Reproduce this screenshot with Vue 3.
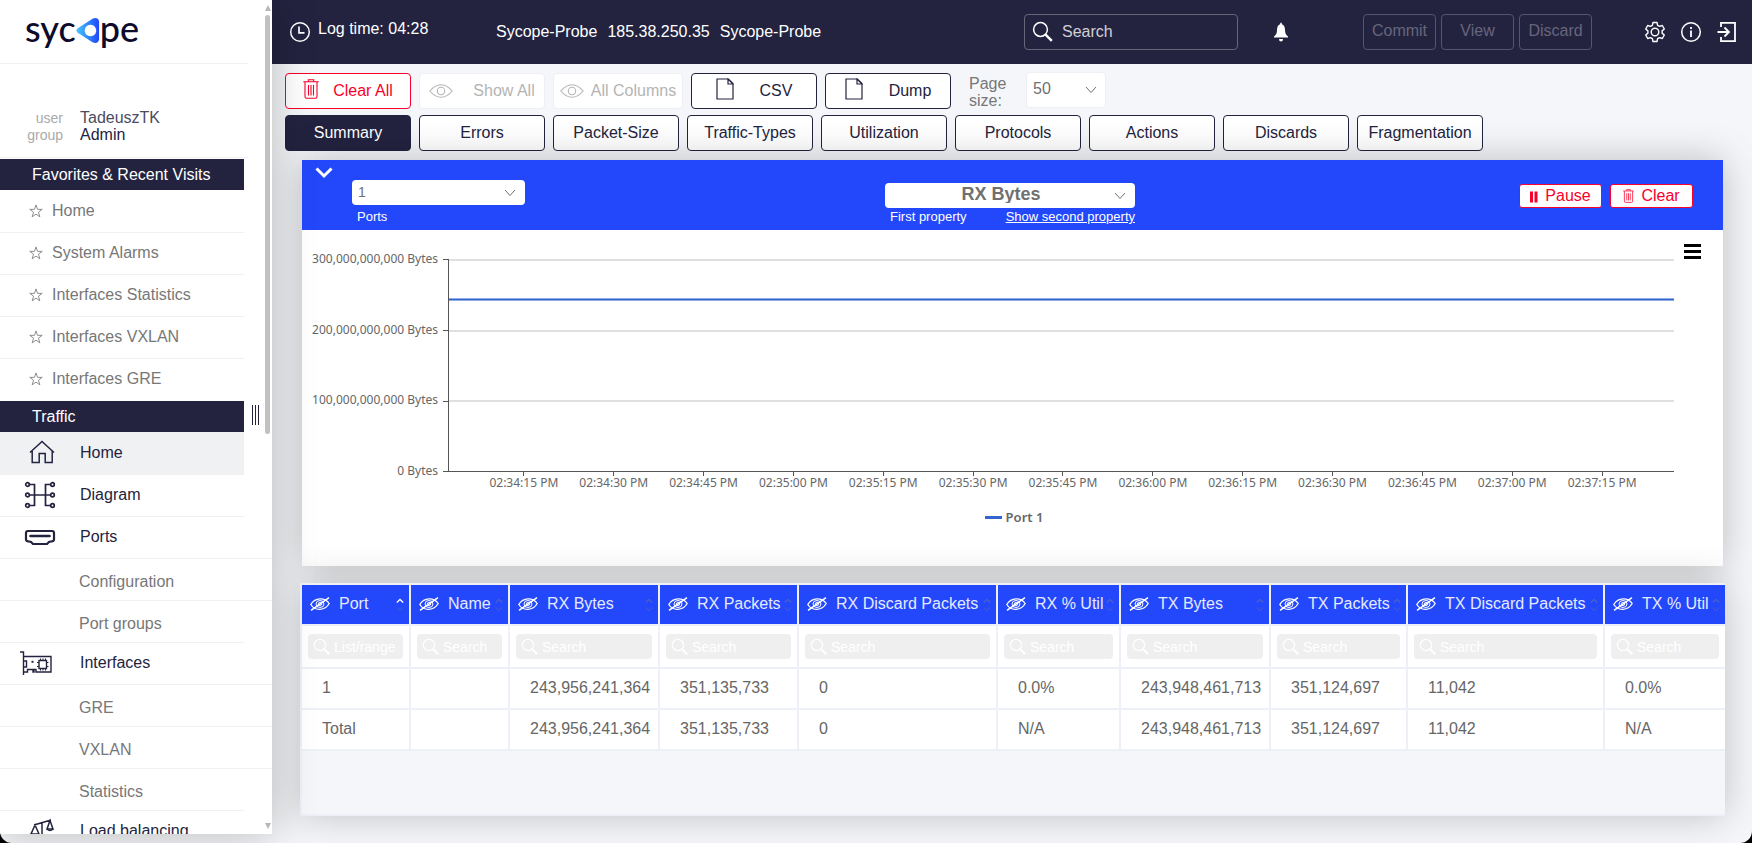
<script setup>
import { ref } from 'vue'

const favorites = ['Home', 'System Alarms', 'Interfaces Statistics', 'Interfaces VXLAN', 'Interfaces GRE']

const traffic = [
  { label: 'Home', icon: 'home', active: true },
  { label: 'Diagram', icon: 'diagram' },
  { label: 'Ports', icon: 'ports', children: ['Configuration', 'Port groups'] },
  { label: 'Interfaces', icon: 'card', children: ['GRE', 'VXLAN', 'Statistics'] },
  { label: 'Load balancing', icon: 'scale' }
]

const tabs = ['Summary', 'Errors', 'Packet-Size', 'Traffic-Types', 'Utilization', 'Protocols', 'Actions', 'Discards', 'Fragmentation']
const activeTab = ref('Summary')

const yLabels = ['300,000,000,000 Bytes', '200,000,000,000 Bytes', '100,000,000,000 Bytes', '0 Bytes']
const xLabels = [
  '02:34:15 PM', '02:34:30 PM', '02:34:45 PM', '02:35:00 PM', '02:35:15 PM', '02:35:30 PM', '02:35:45 PM',
  '02:36:00 PM', '02:36:15 PM', '02:36:30 PM', '02:36:45 PM', '02:37:00 PM', '02:37:15 PM'
]
const rxBytes = 243956241364
const lineTop = (1 - rxBytes / 300000000000) * 100 + '%'

const columns = [
  { name: 'Port', share: 109 },
  { name: 'Name', share: 99 },
  { name: 'RX Bytes', share: 150 },
  { name: 'RX Packets', share: 139 },
  { name: 'RX Discard Packets', share: 199 },
  { name: 'RX % Util', share: 123 },
  { name: 'TX Bytes', share: 150 },
  { name: 'TX Packets', share: 137 },
  { name: 'TX Discard Packets', share: 197 },
  { name: 'TX % Util', share: 120 }
]
const totalShare = columns.reduce((sum, c) => sum + c.share, 0)

const rows = [
  ['1', '', '243,956,241,364', '351,135,733', '0', '0.0%', '243,948,461,713', '351,124,697', '11,042', '0.0%'],
  ['Total', '', '243,956,241,364', '351,135,733', '0', 'N/A', '243,948,461,713', '351,124,697', '11,042', 'N/A']
]
</script>

<template>
  <div class="app">
    <svg class="sprite" aria-hidden="true">
      <symbol id="i-star" viewBox="0 0 12 12"><path d="M6 .8 7.3 4.6h4L8.1 7l1.2 4L6 8.7 2.7 11l1.2-4L.7 4.6h4z" fill="none" stroke="currentColor" stroke-width=".7" /></symbol>
      <symbol id="i-home" viewBox="-2 0 32 28"><path d="M4 13.5 16 2.500l12 11M6.200 12v11.500h7v-9h6v9h7V12" fill="none" stroke="currentColor" stroke-width="1.500" /></symbol>
      <symbol id="i-diagram" viewBox="0 0 32 28">
        <g fill="none" stroke="currentColor" stroke-width="1.700"><path d="M5 3.500h5.500v21H5M27 3.500h-5.500v21H27M5 14h22" />
        <g fill="#fff"><circle cx="3.500" cy="3.500" r="1.800" /><circle cx="3.500" cy="14" r="1.800" /><circle cx="3.500" cy="24.500" r="1.800" /><circle cx="28.500" cy="3.500" r="1.800" /><circle cx="28.500" cy="14" r="1.800" /><circle cx="28.500" cy="24.500" r="1.800" /></g></g>
      </symbol>
      <symbol id="i-ports" viewBox="0 0 32 28"><path d="M4 8h24q2 0 2 2v6.500q0 1.500-2 1.800l-3 .7-2 2H9l-2-2-3-.7q-2-.3-2-1.800V10q0-2 2-2z" fill="none" stroke="currentColor" stroke-width="2.200" /><path d="M6.500 13h19" stroke="currentColor" stroke-width="2.600" stroke-linecap="round" /></symbol>
      <symbol id="i-card" viewBox="4 0 32 28" overflow="visible"><g fill="none" stroke="currentColor" stroke-width="1.400"><path d="M0 3h3.500v23M3.500 7.500H31v15.500H16v-2.500h-2V23h-1v-2.500H7.500V23h-4M3.500 12h3v6h-3M19 11.500h7.500v8H19z" /><path d="M20.500 11.500V9.500M23 11.500V9.500M25.500 11.500V9.500M20.500 21.500v-2M23 21.500v-2M25.500 21.500v-2M19 13.500h-2M19 17.500h-2M26.500 13.500h2M26.500 17.500h2" stroke-width="1" /><path d="M11.500 12.800h2" stroke-width="2" /></g></symbol>
      <symbol id="i-scale" viewBox="-2 0 32 28"><g fill="none" stroke="currentColor" stroke-width="1.500"><path d="M8 8 25 3M16 5.500V24M11 24h11M9 8l-4 9h8zM24 3.500 21 12h6z" /><path d="M4 17q5 4 9 0M21 12q3 3 6 0" /></g></symbol>
      <symbol id="i-clock" viewBox="0 0 22 22"><circle cx="11" cy="11" r="9.300" fill="none" stroke="currentColor" stroke-width="1.500" /><path d="M10 5.500v6.300h5.500" fill="none" stroke="currentColor" stroke-width="1.700" /></symbol>
      <symbol id="i-search" viewBox="0 0 22 22"><circle cx="8.500" cy="8.500" r="6.900" fill="none" stroke="currentColor" stroke-width="1.500" /><path d="m13.300 13.300 6.500 6.500" stroke="currentColor" stroke-width="2.500" /></symbol>
      <symbol id="i-bell" viewBox="0 0 16 20"><path d="M8 .5q.9 0 .9 1.700Q12 3.500 12 8q0 4.500 3 6.500v1H1v-1Q4 12.500 4 8q0-4.500 3.100-5.800Q7.100.5 8 .5zM6 17h4q0 2.500-2 2.500T6 17z" fill="currentColor" /></symbol>
      <symbol id="i-gear" viewBox="0 0 22 22"><g fill="none" stroke="currentColor" stroke-width="1.400"><path d="M9 1.500h4l.6 2.800 1.900 1.100 2.800-.9 2 3.500-2.200 1.900v2.200l2.200 1.900-2 3.500-2.800-.9-1.900 1.100-.6 2.800H9l-.6-2.800-1.900-1.100-2.800.9-2-3.500 2.200-1.900V9.900L1.700 8l2-3.500 2.800.9 1.900-1.100z" stroke-linejoin="round" /><circle cx="11" cy="11" r="3.800" /></g></symbol>
      <symbol id="i-info" viewBox="0 0 22 22"><circle cx="11" cy="11" r="9.300" fill="none" stroke="currentColor" stroke-width="1.500" /><path d="M11 9.500V16M11 6v2" stroke="currentColor" stroke-width="1.800" /></symbol>
      <symbol id="i-exit" viewBox="0 0 22 22"><path d="M5 6V1.800h14v18.400H5V16M1.500 11h11M8.500 6.500 13 11l-4.500 4.500" fill="none" stroke="currentColor" stroke-width="1.800" /></symbol>
      <symbol id="i-trash" viewBox="0 0 16 20"><g fill="none" stroke="currentColor" stroke-width="1.100"><path d="M.3 2.700h15.400M5.300 2.500V.7h5.400v1.800M2 3v14.500q0 1.800 1.600 1.800h8.800q1.600 0 1.600-1.800V3" /><path d="M5.500 6v10.500M8 6v10.500M10.500 6v10.500" /></g></symbol>
      <symbol id="i-eye" viewBox="0 0 24 14"><g fill="none" stroke="currentColor" stroke-width="1.100"><path d="M.8 7Q6 .7 12 .7T23.200 7Q18 13.300 12 13.300T.8 7z" /><circle cx="12" cy="7" r="3.700" /></g></symbol>
      <symbol id="i-file" viewBox="0 0 18 22"><path d="M1 1h11.500L17 5.500V21H1zM12 1v5h5z" fill="none" stroke="currentColor" stroke-width="1.200" /></symbol>
      <symbol id="i-hide" viewBox="0 0 20 14"><g fill="none" stroke="currentColor"><path d="M.8 7.500Q4 2 10 1.800t9.200 4.700Q16 12 10 12.300T.8 7.500z" stroke-width="1.300" /><ellipse cx="10" cy="7" rx="4" ry="3.500" /><ellipse cx="10" cy="7" rx="1.800" ry="1.500" /><path d="m1 13.300 18-12.600" stroke-width="1.600" /></g></symbol>
      <symbol id="i-down" viewBox="0 0 12 8"><path d="m1 1 5 5.500L11 1" fill="none" stroke="currentColor" stroke-width="1" /></symbol>
      <symbol id="i-sort" viewBox="0 0 8 14"><path d="m.8 4.500 3.200-3 3.200 3" fill="none" stroke="var(--up)" stroke-width="1.300" /><path d="M.8 9.500 4 12.500l3.200-3" fill="none" stroke="#4a5fc8" stroke-width="1" /></symbol>
    </svg>

    <aside class="sidebar">
      <div class="side-scroll">
        <a class="logo" href="#" aria-label="sycope">
          <span>syc</span>
          <svg viewBox="0 0 24 28" class="logo-mark"><defs><linearGradient id="lg"><stop offset="0" stop-color="#47c8fb" /><stop offset=".6" stop-color="#2b7bfb" /><stop offset="1" stop-color="#2347fb" /></linearGradient></defs><path fill="url(#lg)" fill-rule="evenodd" d="M1 12 17 1.500Q23 0 23.500 5v18Q23 28 17 26.500L1 16Q-1 14 1 12zM14.500 8a6 6 0 1 0 .1 0z" /></svg>
          <span>pe</span>
        </a>
        <dl class="account">
          <dt>user</dt><dd class="soft">TadeuszTK</dd>
          <dt>group</dt><dd>Admin</dd>
        </dl>
        <h2 class="side-head">Favorites &amp; Recent Visits</h2>
        <ul class="favs">
          <li v-for="f in favorites" :key="f"><a href="#"><svg><use href="#i-star" /></svg>{{ f }}</a></li>
        </ul>
        <h2 class="side-head">Traffic</h2>
        <ul class="nav">
          <li v-for="t in traffic" :key="t.label">
            <a href="#" :class="{ active: t.active, wide: t.children }"><svg><use :href="'#i-' + t.icon" /></svg>{{ t.label }}</a>
            <ul v-if="t.children" class="sub">
              <li v-for="c in t.children" :key="c"><a href="#">{{ c }}</a></li>
            </ul>
          </li>
        </ul>
      </div>
      <div class="grip"></div>
      <div class="scrollbar"><i class="arrow-up"></i><i class="thumb"></i><i class="arrow-down"></i></div>
    </aside>

    <div class="page">
      <header class="topbar">
        <div class="log"><svg class="ic22"><use href="#i-clock" /></svg><span>Log time: 04:28</span></div>
        <div class="probe"><span>Sycope-Probe</span><span>185.38.250.35</span><span>Sycope-Probe</span></div>
        <label class="search"><svg class="ic22"><use href="#i-search" /></svg><input type="text" placeholder="Search" aria-label="Search" /></label>
        <button class="bell" aria-label="Notifications"><svg><use href="#i-bell" /></svg></button>
        <div class="commit"><button disabled>Commit</button><button disabled>View</button><button disabled>Discard</button></div>
        <div class="tools">
          <button aria-label="Settings"><svg class="ic22"><use href="#i-gear" /></svg></button>
          <button aria-label="Information"><svg class="ic22"><use href="#i-info" /></svg></button>
          <button aria-label="Log out"><svg class="ic22"><use href="#i-exit" /></svg></button>
        </div>
      </header>

      <main>
        <div class="bar">
          <button class="btn red"><svg class="trash"><use href="#i-trash" /></svg><span>Clear All</span></button>
          <button class="btn off" disabled><svg class="eye"><use href="#i-eye" /></svg><span>Show All</span></button>
          <button class="btn off cols" disabled><svg class="eye"><use href="#i-eye" /></svg><span>All Columns</span></button>
          <button class="btn doc"><svg class="file"><use href="#i-file" /></svg><span>CSV</span></button>
          <button class="btn doc"><svg class="file"><use href="#i-file" /></svg><span>Dump</span></button>
          <label class="size-label" for="page-size">Page size:</label>
          <div class="select size"><select id="page-size"><option>50</option></select><svg><use href="#i-down" /></svg></div>
        </div>
        <div class="bar tabs">
          <button v-for="t in tabs" :key="t" class="btn" :class="{ on: t === activeTab }" @click="activeTab = t">{{ t }}</button>
        </div>

        <section class="panel">
          <div class="panel-head">
            <div class="left">
              <button class="fold" aria-label="Collapse"><svg viewBox="0 0 18 12"><path d="m1.500 1.500 7.500 7.500 7.500-7.500" fill="none" stroke="#fff" stroke-width="3" /></svg></button>
              <div class="ports">
                <div class="select"><select id="ports"><option>1</option></select><svg><use href="#i-down" /></svg></div>
                <label for="ports">Ports</label>
              </div>
            </div>
            <div class="prop">
              <div class="select"><select id="prop"><option>RX Bytes</option></select><svg><use href="#i-down" /></svg></div>
              <div class="caption"><label for="prop">First property</label><a href="#">Show second property</a></div>
            </div>
            <div class="actions">
              <button><svg class="pause" viewBox="0 0 8 12"><path d="M0 .5h3v11H0zM4.500.5h3v11h-3z" fill="#f8002b" /></svg>Pause</button>
              <button><svg class="bin"><use href="#i-trash" /></svg>Clear</button>
            </div>
          </div>
          <div class="chart">
            <div class="y-axis"><span v-for="y in yLabels" :key="y">{{ y }}</span></div>
            <div class="plot">
              <div class="grid-area"><i></i><i></i><i></i><b class="series" :style="{ top: lineTop }"></b></div>
              <div class="x-axis"><span></span><span v-for="x in xLabels" :key="x" class="tick">{{ x }}</span></div>
            </div>
            <button class="burger" aria-label="Chart menu"><i></i><i></i><i></i></button>
          </div>
          <div class="legend"><i></i>Port 1</div>
        </section>

        <section class="data">
          <table>
            <colgroup><col v-for="c in columns" :key="c.name" :style="{ width: (c.share / totalShare) * 100 + '%' }" /></colgroup>
            <thead>
              <tr class="heads">
                <th v-for="(c, i) in columns" :key="c.name" :class="{ sorted: i === 0 }">
                  <div><svg class="hide"><use href="#i-hide" /></svg><span>{{ c.name }}</span><svg class="sort"><use href="#i-sort" /></svg></div>
                </th>
              </tr>
              <tr class="filters">
                <td v-for="(c, i) in columns" :key="c.name">
                  <label><svg><use href="#i-search" /></svg><input type="text" :placeholder="i === 0 ? 'List/range' : 'Search'" :aria-label="'Filter ' + c.name" /></label>
                </td>
              </tr>
            </thead>
            <tbody>
              <tr v-for="r in rows" :key="r[0]"><td v-for="(v, i) in r" :key="i">{{ v }}</td></tr>
            </tbody>
          </table>
        </section>
      </main>
    </div>
  </div>
</template>

<style>
html { background: #000; }
body { margin: 0; }
</style>

<style scoped>
* { box-sizing: border-box; }
.app {
  display: flex;
  min-height: 100vh;
  background: #f5f6f9;
  border-radius: 0 0 12px 12px;
  overflow: hidden;
  font-family: "Liberation Sans", Arial, sans-serif;
  font-size: 16px;
  line-height: 18px;
  color: #232340;
}
.sprite { position: absolute; width: 0; height: 0; }
button, input, select { font: inherit; color: inherit; margin: 0; }
button { padding: 0; border: 0; background: none; }
a { color: inherit; text-decoration: none; }
ul { list-style: none; margin: 0; padding: 0; }
svg { display: block; flex: none; overflow: visible; }
.ic22 { width: 22px; height: 22px; }

/* sidebar */
.sidebar {
  position: relative;
  z-index: 2;
  flex: none;
  width: 272px;
  height: calc(100vh - 9px);
  background: #fff;
  box-shadow: 0 0 40px rgba(0, 0, 0, .25);
}
.side-scroll { height: 100%; overflow: hidden; }
.logo {
  display: flex;
  align-items: center;
  width: 248px;
  height: 64px;
  padding: 0 0 8px 25px;
  border-bottom: 1px solid #f0f1f2;
  font: 500 36px/40px Lato, sans-serif;
  color: #0d0b2b;
}
.logo-mark { width: 24px; height: 27px; margin: 5px 0 0; }
.account {
  display: grid;
  grid-template-columns: 63px 1fr;
  column-gap: 17px;
  align-content: end;
  width: 248px;
  height: 94px;
  margin: 0 0 1px;
  padding-bottom: 14px;
  border-bottom: 1px solid #f0f1f2;
  line-height: 17px;
}
.account dt { text-align: right; font-size: 14px; line-height: 19px; height: 17px; color: #aaa; }
.account dd { margin: 0; }
.soft { color: #4b4b62; }
.side-head {
  width: 244px;
  height: 31px;
  margin: 0;
  padding-left: 32px;
  background: #232340;
  color: #fff;
  font-size: 16px;
  font-weight: 400;
  line-height: 32px;
}
.favs { width: 244px; }
.favs, .nav { padding-top: 1px; }
.nav { background: linear-gradient(#f0f1f3, #f0f1f3) 0 0 / 244px 1px no-repeat; }
.favs a, .nav a { display: flex; align-items: center; height: 42px; padding-bottom: 1px; border-bottom: 1px solid #f0f1f2; }
.favs a { color: #777; padding-left: 29px; gap: 9px; }
.favs svg { width: 14px; height: 14px; }
.favs li:last-child a { border-color: #fff; }
.nav > li > a { width: 244px; padding-left: 24px; gap: 24px; }
.nav > li > a.wide { width: auto; }
.nav svg { width: 32px; height: 28px; }
.nav a.active { background: #f0f1f3; }
.nav .sub a { padding: 4px 0 0 79px; color: #777; }
.sub li:last-child a { width: 244px; }
.grip {
  position: absolute;
  left: 252px;
  top: 405px;
  width: 7px;
  height: 20px;
  background: repeating-linear-gradient(90deg, #232340 0 1px, transparent 1px 3px);
}
.scrollbar {
  position: absolute;
  top: 5px;
  right: 1px;
  bottom: 5px;
  width: 7px;
  display: flex;
  flex-direction: column;
  align-items: center;
  gap: 4px;
}
.thumb { width: 5px; height: 419px; border-radius: 3px; background: #c1c1c1; }
.arrow-up, .arrow-down { border: 3px solid transparent; }
.arrow-up { border-top: 0; border-bottom: 6px solid #b8b8b8; }
.arrow-down { margin-top: auto; border-bottom: 0; border-top: 6px solid #b8b8b8; }

/* top bar */
.page { flex: 1; min-width: 0; display: flex; flex-direction: column; }
.topbar {
  display: flex;
  align-items: center;
  height: 64px;
  padding: 0 14px 0 17px;
  background: #232340;
  color: #fff;
}
.log { display: flex; align-items: center; gap: 7px; width: 207px; }
.log span { padding-bottom: 6px; }
.probe { display: flex; gap: 10px; flex: 1; white-space: nowrap; }
.search {
  display: flex;
  align-items: center;
  gap: 8px;
  width: 214px;
  height: 36px;
  padding: 0 7px;
  border: 1px solid #66667b;
  border-radius: 4px;
}
.search input { flex: 1; min-width: 0; padding: 0; border: 0; background: none; outline: 0; }
.search input::placeholder { color: #d0d0d6; opacity: 1; }
.bell { margin: 0 74px 0 35px; }
.bell svg { width: 16px; height: 20px; }
.commit { display: flex; gap: 5px; margin-right: 52px; }
.commit button { width: 73px; height: 36px; padding-bottom: 3px; border: 1px solid #55556b; border-radius: 4px; color: #66667b; }
.tools { display: flex; gap: 14px; }

/* toolbars */
main { flex: 1; display: flex; flex-direction: column; padding: 9px 27px 27px 28px; }
.bar { display: flex; gap: 8px; margin: 0 0 6px -15px; }
.btn {
  display: flex;
  align-items: center;
  justify-content: center;
  width: 126px;
  height: 36px;
  padding-bottom: 1px;
  border: 1px solid #232340;
  border-radius: 4px;
  background: #fff;
  white-space: nowrap;
}
.btn.on { background: #232340; color: #fff; }
.btn.red { border-color: #f8002b; color: #f8002b; gap: 14px; }
.btn.off { border-color: #edeff4; color: #b4b4b4; gap: 20px; }
.btn.cols { width: 130px; gap: 7px; }
.btn.doc { gap: 26px; padding: 0; }
.trash { width: 16px; height: 20px; margin-bottom: 3px; }
.eye { width: 24px; height: 14px; }
.file { width: 18px; height: 22px; margin-bottom: 4px; }
.size-label { width: 50px; margin: 2px 0 0 10px; line-height: 17px; color: #777; }
.select { position: relative; color: #707070; }
.select select {
  display: block;
  width: 100%;
  height: 25px;
  padding: 0 28px 2px 6px;
  border: 0;
  border-radius: 4px;
  background: #fff;
  appearance: none;
  outline: 0;
}
.select svg { position: absolute; right: 9px; top: 9px; width: 12px; height: 8px; pointer-events: none; }
.size { width: 80px; margin: -1px 0 0 -1px; }
.size select { height: 36px; border: 1px solid #edeff4; }
.size svg { top: 14px; }
.tabs { margin-bottom: 9px; }

/* chart panel */
.panel {
  position: relative;
  min-height: 406px;
  margin: 0 2px 17px 2px;
  background: #fff;
  box-shadow: 0 0 36px rgba(0, 0, 0, .24);
}
.panel-head {
  display: grid;
  grid-template-columns: 1fr 250px 1fr;
  height: 70px;
  padding-right: 5px;
  background: #2347fb;
  color: #fff;
  font-size: 13px;
}
.left { display: flex; align-items: flex-start; padding: 7px 0 0 13px; gap: 19px; }
.fold svg { width: 18px; height: 12px; }
.ports { width: 173px; padding-top: 13px; }
.ports select { font-size: 14px; }
.ports label { display: block; padding: 3px 5px; }
.prop { padding-top: 23px; }
.prop select { padding: 0 26px 4px 8px; font-size: 18px; font-weight: 700; text-align: center; text-align-last: center; }
.caption { display: flex; justify-content: space-between; padding: 1px 0 0 5px; line-height: 16px; }
.caption a { text-decoration: underline; }
.actions { display: flex; justify-content: flex-end; gap: 8px; padding: 24px 25px 0 0; }
.actions button {
  display: flex;
  align-items: center;
  justify-content: center;
  gap: 7px;
  width: 83px;
  height: 24px;
  border: 1px solid #f8002b;
  border-radius: 3px;
  background: #fff;
  color: #f8002b;
  font-size: 16px;
}
.pause { width: 8px; height: 12px; margin-top: 2px; }
.bin { width: 11px; height: 14px; }
.chart {
  display: flex;
  padding: 29px 22px 0 0;
  color: #666;
  font: 12px/16px "Noto Sans", "Open Sans", sans-serif;
}
.y-axis {
  display: flex;
  flex-direction: column;
  justify-content: space-between;
  width: 136px;
  height: 228px;
  margin: -8px 10px 0 0;
  text-align: right;
  white-space: nowrap;
}
.plot { flex: 1; min-width: 0; }
.grid-area {
  position: relative;
  display: flex;
  flex-direction: column;
  height: 213px;
  border-left: 1px solid #555;
  border-bottom: 1px solid #555;
}
.grid-area::before {
  content: "";
  position: absolute;
  left: -6px;
  top: 0;
  bottom: -1px;
  width: 5px;
  border: solid #555;
  border-width: 1px 0;
  background: linear-gradient(#555, #555) 0 70px / 5px 1px no-repeat, linear-gradient(#555, #555) 0 141px / 5px 1px no-repeat;
}
.grid-area i { flex: 1; border-top: 2px solid #e0e0e0; }
.series { position: absolute; left: 0; right: 0; height: 3px; margin-top: -1px; background: #3366cc; border: solid #8fade4; border-width: 1px 0; }
.x-axis { display: grid; grid-template-columns: 31fr repeat(13, 90fr) 27fr; }
.tick { text-align: center; white-space: nowrap; line-height: 14px; }
.tick::before { content: ""; display: block; width: 1px; height: 4px; margin: 0 auto; background: #555; }
.burger { display: flex; flex-direction: column; gap: 3px; width: 17px; margin: -15px 0 0 10px; }
.burger i { height: 3px; background: #000; }
.legend {
  display: flex;
  align-items: center;
  justify-content: center;
  gap: 4px;
  padding: 18px 0 0 3px;
  color: #666;
  font: 600 13px/18px "Noto Sans", "Open Sans", sans-serif;
}
.legend i { width: 17px; height: 3px; background: #3366cc; }

/* data table */
.data {
  position: relative;
  flex: 1;
  border: 2px solid #edf0f6;
  border-right: 0;
  background: #f5f6f9;
  box-shadow: 0 0 36px rgba(0, 0, 0, .22);
}
table { width: 100%; table-layout: fixed; border-collapse: separate; border-spacing: 0; }
th, td { padding: 0; border: solid #edf0f6; border-width: 0 2px 2px 0; white-space: nowrap; }
th:last-child, td:last-child { border-right: 0; }
th { height: 41px; padding-bottom: 2px; background: #2347fb; color: #e6eaff; font-weight: 400; text-align: left; --up: #4a5fc8; }
th.sorted { --up: #fff; }
th div { display: flex; align-items: center; padding: 0 5px 0 8px; }
th span { flex: 1; width: 0; margin-left: 9px; }
.hide { width: 20px; height: 14px; color: #fff; }
.sort { width: 8px; height: 14px; margin-top: 3px; }
.filters td { height: 43px; padding: 0 6px; background: #fff; }
.filters label {
  display: flex;
  align-items: center;
  gap: 3px;
  height: 25px;
  padding-left: 5px;
  border-radius: 4px;
  background: #efefef;
  color: #fff;
}
.filters svg { width: 18px; height: 18px; }
.filters input { flex: 1; width: 0; min-width: 0; height: 25px; padding: 0; border: 0; background: none; outline: 0; font-size: 14px; }
.filters input::placeholder { color: #fff; opacity: 1; }
tbody td { height: 41px; padding: 0 0 2px 20px; background: #fff; color: #666; }
</style>
